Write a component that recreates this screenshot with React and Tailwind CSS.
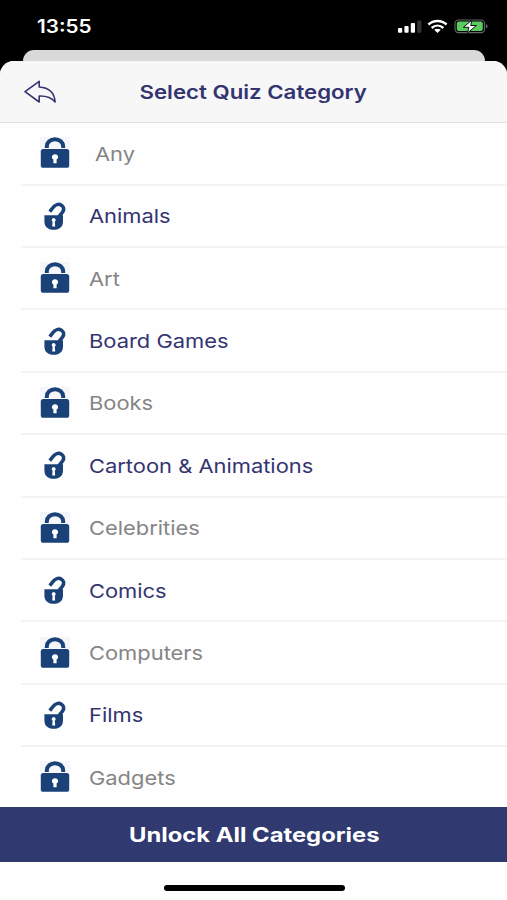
import React from 'react';

const categories = [
    { name: 'Any', locked: true, indent: true },
    { name: 'Animals', locked: false },
    { name: 'Art', locked: true },
    { name: 'Board Games', locked: false },
    { name: 'Books', locked: true },
    { name: 'Cartoon & Animations', locked: false },
    { name: 'Celebrities', locked: true },
    { name: 'Comics', locked: false },
    { name: 'Computers', locked: true },
    { name: 'Films', locked: false },
    { name: 'Gadgets', locked: true },
];

const LockClosed = () => (
    <svg className="h-8 w-[30px] shrink-0" viewBox="0 0 30 32" fill="none">
        <rect width="30" height="20" fill="#f4f6fa" />
        <path d="M6.8 11V9.4a8.2 7.2 0 0 1 16.4 0V11" stroke="#1b4278" strokeWidth="4" />
        <rect x="0.8" y="12" width="28.4" height="18.8" rx="2.6" fill="#1b4278" />
        <path d="M15 17.2a3.1 2.9 0 0 0-1.6 5.4v3.7h3.2v-3.7a3.1 2.9 0 0 0-1.6-5.4z" fill="#fff" />
    </svg>
);

const LockOpen = () => (
    <svg className="h-8 w-[30px] shrink-0" viewBox="0 0 30 32" fill="none">
        <path d="M9.8 11.6 12.6 8C15.2 4.4 18.8 3.6 21.4 5.2c2.6 1.6 2.9 4.4 1.2 6.8L19 16.6" stroke="#1b4278" strokeWidth="3.6" />
        <path d="M4.4 15.2H23v6.2c0 5.2-3.4 8.3-9.3 8.3s-9.3-3.1-9.3-8.3z" fill="#1b4278" />
        <path d="M13.7 18a2.1 2.1 0 0 0-1.1 3.8l-.4 4.8h3l-.4-4.8a2.1 2.1 0 0 0-1.1-3.8z" fill="#fff" />
    </svg>
);

const BackIcon = () => (
    <svg className="h-6 w-8" viewBox="0 0 32 24" fill="none" stroke="#343471" strokeWidth="1.6" strokeLinejoin="round">
        <path d="M1 11.7 15.2 1.3V7c9.5.6 15.3 5.2 15.9 14.9-3.5-4.5-8.1-6.1-15.9-5.9v6z" />
    </svg>
);

const StatusBar = () => (
    <div className="flex h-[50px] shrink-0 items-start justify-between pr-[18px] pl-[37px] pt-[15px]">
        <span className="origin-left scale-x-[1.15] text-[18px] leading-6 font-semibold text-white">13:55</span>
        <div className="flex pt-[4px]">
            <svg className="h-[15px] w-6" viewBox="0 0 24 15">
                <rect x="0" y="9" width="4.2" height="4.8" rx="1" fill="#fff" />
                <rect x="6.4" y="7" width="4.2" height="6.8" rx="1" fill="#fff" />
                <rect x="12.8" y="4" width="4.2" height="9.8" rx="1" fill="#fff" />
                <rect x="19.2" y="1.5" width="4.2" height="12.3" rx="1" fill="#333" />
            </svg>
            <svg className="ml-[5px] h-[15px] w-[21px]" viewBox="0 0 21 15" fill="none" stroke="#fff" strokeWidth="2.4">
                <path d="M1.4 5.5C6.6.8 14.4.8 19.6 5.5" />
                <path d="M4.7 9c3.5-3.2 8.1-3.2 11.6 0" />
                <path d="M10.5 13.9 7.2 10.8c1.9-1.5 4.7-1.5 6.6 0z" fill="#fff" stroke="none" />
            </svg>
            <svg className="ml-[6px] h-[15px] w-[35px]" viewBox="0 0 35 15">
                <rect x="1" y="1" width="29.6" height="12.6" rx="3.6" fill="#000" stroke="#666" strokeWidth="1.1" />
                <rect x="2.8" y="2.6" width="26" height="9.4" rx="2" fill="#5bcb61" />
                <path d="M32 5.3c2.2.8 2.2 3.2 0 4z" fill="#666" />
                <path d="M18 1 9.4 8.3h5.4l-1.2 5.6 8.8-7.4h-5.7z" fill="#fff" stroke="#111" strokeWidth="1" />
            </svg>
        </div>
    </div>
);

const CategoryRow = ({ category }) => (
    <li className="ml-[21px] flex h-[62.4px] items-center border-b-2 border-[#f3f3f4] pl-[19px]">
        {category.locked ? <LockClosed /> : <LockOpen />}
        <span
            className={`origin-left scale-x-[1.152] pt-[3px] text-[19px] leading-6 whitespace-nowrap ${category.indent ? 'ml-[25px]' : 'ml-[19px]'} ${category.locked ? 'text-[#858585]' : 'text-[#343471]'}`}
        >
            {category.name}
        </span>
    </li>
);

const App = () => {
    return (
        <div className="flex h-[900px] w-[507px] flex-col overflow-hidden bg-black font-['Inter',sans-serif]">
            <StatusBar />
            <div className="mr-[22px] ml-[23px] h-[11px] shrink-0 rounded-t-[11px] bg-[#d9d9d9]" />
            <div className="flex min-h-0 flex-1 flex-col overflow-hidden rounded-t-[14px] bg-[#fefefe]">
                <header className="grid h-[62.2px] shrink-0 grid-cols-[1fr_auto_1fr] items-center border-b border-[#dededf] bg-[#f7f7f7] pl-6">
                    <button type="button" aria-label="Back" className="w-8">
                        <BackIcon />
                    </button>
                    <h1 className="-ml-6 scale-x-[1.17] pt-[2px] text-[19px] leading-6 font-semibold whitespace-nowrap text-[#343471]">
                        Select Quiz Category
                    </h1>
                </header>
                <ul className="min-h-0 flex-1 overflow-hidden">
                    {categories.map((category) => (
                        <CategoryRow key={category.name} category={category} />
                    ))}
                </ul>
                <button type="button" className="flex h-[55px] w-full shrink-0 items-center justify-center bg-[#303970] pl-[2px] text-white">
                    <span className="scale-x-[1.19] text-[20px] leading-6 font-bold whitespace-nowrap">Unlock All Categories</span>
                </button>
                <div className="flex h-[38px] shrink-0 justify-center pt-[23px] pl-[2px]">
                    <div className="h-[6px] w-[181px] rounded-full bg-black" />
                </div>
            </div>
        </div>
    );
};

export default App;
